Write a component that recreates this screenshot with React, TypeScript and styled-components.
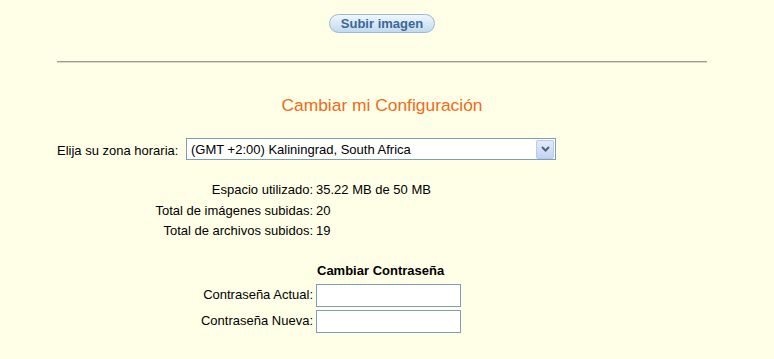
import styled, { createGlobalStyle } from "styled-components";

const GlobalStyle = createGlobalStyle`
  html, body {
    margin: 0;
    padding: 0;
    background: #ffffe7;
  }
  body {
    font-family: "Liberation Sans", Arial, sans-serif;
    font-size: 13px;
    color: #000;
  }
`;

const Page = styled.div`
  width: 764px;
  display: flex;
  flex-direction: column;
  align-items: center;
  padding-top: 14px;
`;

const UploadButton = styled.button`
  width: 106px;
  height: 19px;
  padding: 0;
  border: 1px solid #9cb8d4;
  border-radius: 10px;
  background: linear-gradient(#f0f6fc, #d8e8f6 50%, #c2daf0);
  color: #3b6896;
  font-family: "Liberation Sans", Arial, sans-serif;
  font-size: 13px;
  font-weight: bold;
  line-height: 17px;
`;

const Rule = styled.hr`
  width: 650px;
  margin: 28px 0 0;
  border: none;
  border-top: 1px solid #9c9c8c;
  border-bottom: 1px solid #d8d8c8;
`;

const Title = styled.h2`
  margin: 32px 0 0;
  font-size: 17.4px;
  font-weight: normal;
  color: #f06a1c;
  line-height: 20px;
`;

const Form = styled.div`
  align-self: stretch;
  padding-left: 57px;
  display: flex;
  flex-direction: column;
`;

const ZoneRow = styled.div`
  display: flex;
  align-items: center;
  margin-top: 23px;
  height: 22px;
`;

const ZoneLabel = styled.span`
  width: 129px;
  padding-top: 3px;
`;

const SelectBox = styled.div`
  box-sizing: border-box;
  width: 370px;
  height: 22px;
  border: 1px solid #7f9db9;
  background: #fff;
  display: flex;
  align-items: center;
  justify-content: space-between;
  padding-left: 4px;
  padding-right: 1px;
`;

const ArrowBtn = styled.div`
  width: 16px;
  height: 17px;
  border: 1px solid #b8cbe8;
  border-radius: 2px;
  background: linear-gradient(#e2ebfa, #c3d3f2);
  display: flex;
  align-items: center;
  justify-content: center;
`;

const InfoGrid = styled.div`
  display: grid;
  grid-template-columns: 256px auto;
  column-gap: 3px;
  row-gap: 5px;
  align-items: center;
  margin-top: 22px;
`;

const Label = styled.div`
  text-align: right;
  line-height: 15.5px;
`;

const Value = styled.div`
  line-height: 15.5px;
`;

const SubHeading = styled.div`
  grid-column: 2;
  font-weight: bold;
  line-height: 15px;
  padding-left: 1px;
  margin-bottom: 3px;
`;

const PassGrid = styled.div`
  display: grid;
  grid-template-columns: 256px auto;
  column-gap: 3px;
  row-gap: 3px;
  align-items: center;
  margin-top: 24px;
`;

const TextInput = styled.input`
  box-sizing: border-box;
  width: 145px;
  height: 23px;
  border: 1px solid #7f9db9;
  background: #fff;
  margin: 0;
`;

const stats = [
  ["Espacio utilizado:", "35.22 MB de 50 MB"],
  ["Total de imágenes subidas:", "20"],
  ["Total de archivos subidos:", "19"],
];

export default function App() {
  return (
    <>
      <GlobalStyle />
      <Page>
        <UploadButton>Subir imagen</UploadButton>
        <Rule />
        <Title>Cambiar mi Configuración</Title>
        <Form>
          <ZoneRow>
            <ZoneLabel>Elija su zona horaria:</ZoneLabel>
            <SelectBox>
              <span>(GMT +2:00) Kaliningrad, South Africa</span>
              <ArrowBtn>
                <svg width="9" height="6" viewBox="0 0 9 6">
                  <path d="M1 1 L4.5 4.5 L8 1" stroke="#4d6185" strokeWidth="2" fill="none" />
                </svg>
              </ArrowBtn>
            </SelectBox>
          </ZoneRow>
          <InfoGrid>
            {stats.flatMap(([k, v]) => [
              <Label key={k}>{k}</Label>,
              <Value key={k + "v"}>{v}</Value>,
            ])}
          </InfoGrid>
          <PassGrid>
            <SubHeading>Cambiar Contraseña</SubHeading>
            <Label>Contraseña Actual:</Label>
            <TextInput type="password" />
            <Label>Contraseña Nueva:</Label>
            <TextInput type="password" />
          </PassGrid>
        </Form>
      </Page>
    </>
  );
}
